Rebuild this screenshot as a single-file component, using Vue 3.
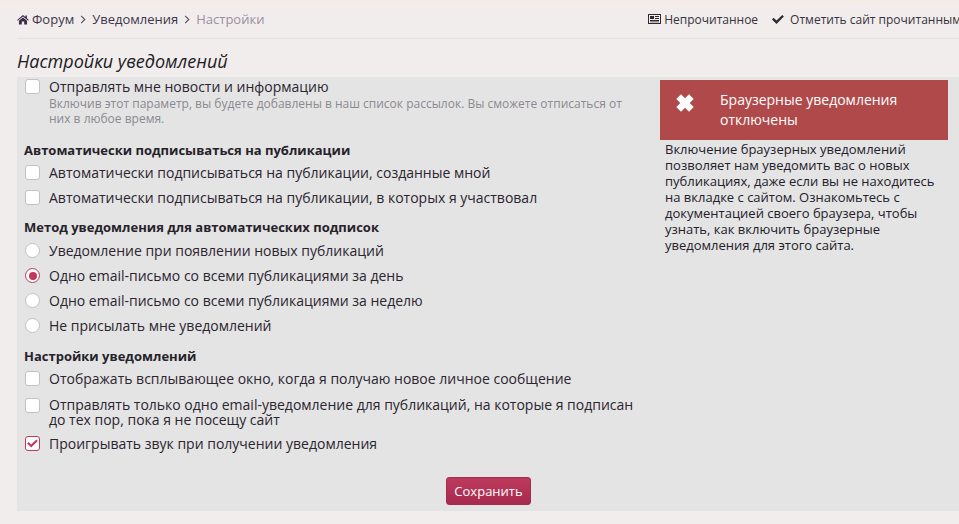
<template>
  <div class="page">
    <div class="topbar">
      <nav class="crumbs">
        <svg class="home" viewBox="0 0 16 13" width="12" height="11"><path fill="#3a2c45" d="M8 0.6 0.2 7l.8 1L8 2.4 15 8l.8-1-2.6-2.1V1h-2v2.2ZM2.6 8.2V13h3.8V9h3.2v4h3.8V8.2L8 3.8Z"/></svg>
        <a>Форум</a>
        <svg class="chev" viewBox="0 0 6 10" width="6" height="9"><path d="M1 1l4 4-4 4" fill="none" stroke="#554a5c" stroke-width="1.2"/></svg>
        <a>Уведомления</a>
        <svg class="chev" viewBox="0 0 6 10" width="6" height="9"><path d="M1 1l4 4-4 4" fill="none" stroke="#554a5c" stroke-width="1.2"/></svg>
        <span class="cur">Настройки</span>
      </nav>
      <div class="actions">
        <span class="act">
          <svg class="ic" viewBox="0 0 13 10" width="13" height="10"><path fill="#2e2a30" fill-rule="evenodd" d="M0 0h13v10H0ZM1 1v8h11V1ZM2 2h4v3H2ZM7 2h4v1H7ZM7 4h4v1H7ZM2 6h9v1H2ZM2 7.500h9v.8H2Z"/></svg>
          Непрочитанное
        </span>
        <span class="act chk">
          <svg class="ic" viewBox="0 0 12 10" width="12" height="10"><path fill="#2e2a30" d="M1.600 3.800 4.500 6.600 10.300.9 11.900 2.500 4.500 9.900 0 5.400Z"/></svg>
          Отметить сайт прочитанным
        </span>
      </div>
    </div>
    <h1 class="title">Настройки уведомлений</h1>
    <form class="panel" @submit.prevent>
      <div class="left">
        <div class="opt news">
          <span class="box"></span>
          <div>
            <div>Отправлять мне новости и информацию</div>
            <div class="hint">Включив этот параметр, вы будете добавлены в наш список рассылок. Вы сможете отписаться от них в любое время.</div>
          </div>
        </div>

        <h3 class="head h1">Автоматически подписываться на публикации</h3>
        <div class="opt"><span class="box"></span><div>Автоматически подписываться на публикации, созданные мной</div></div>
        <div class="opt"><span class="box"></span><div>Автоматически подписываться на публикации, в которых я участвовал</div></div>

        <h3 class="head h2">Метод уведомления для автоматических подписок</h3>
        <div v-for="r in radios" :key="r.t" class="opt">
          <span class="radio" :class="{ on: r.on }"></span><div>{{ r.t }}</div>
        </div>

        <h3 class="head h3">Настройки уведомлений</h3>
        <div class="opt"><span class="box"></span><div>Отображать всплывающее окно, когда я получаю новое личное сообщение</div></div>
        <div class="opt multi"><span class="box"></span><div>Отправлять только одно email-уведомление для публикаций, на которые я подписан до тех пор, пока я не посещу сайт</div></div>
        <div class="opt last">
          <span class="box checked">
            <svg viewBox="0 0 12 10" width="11" height="9"><path fill="#c0395c" d="M1.600 3.400 4.500 6.200 10.300.5 11.900 2.100 4.500 9.500 0 5Z"/></svg>
          </span>
          <div>Проигрывать звук при получении уведомления</div>
        </div>
      </div>
      <aside class="right">
        <div class="alert">
          <svg class="x" viewBox="0 0 18 18" width="18" height="18"><path fill="#fff" d="M5 .3 9 4.300 13 .3 17.700 5 13.700 9 17.700 13 13 17.700 9 13.700 5 17.700.3 13 4.300 9 .3 5Z"/></svg>
          <div class="alert-text">Браузерные уведомления отключены</div>
        </div>
        <p class="desc">Включение браузерных уведомлений позволяет нам уведомить вас о новых публикациях, даже если вы не находитесь на вкладке с сайтом. Ознакомьтесь с документацией своего браузера, чтобы узнать, как включить браузерные уведомления для этого сайта.</p>
      </aside>
      <div class="save"><button type="button">Сохранить</button></div>
    </form>
  </div>
</template>

<script setup>
const radios = [
  { t: 'Уведомление при появлении новых публикаций' },
  { t: 'Одно email-письмо со всеми публикациями за день', on: true },
  { t: 'Одно email-письмо со всеми публикациями за неделю' },
  { t: 'Не присылать мне уведомлений' }
]
</script>

<style>
html, body { margin: 0; background: #f2eded; overflow: hidden; }
</style>
<style scoped>
.page {
  width: 959px; height: 524px; overflow: hidden; box-sizing: border-box;
  padding-left: 17px;
  font-family: "Open Sans", sans-serif; font-size: 14px; color: #2b2530;
  background: linear-gradient(#f5ebe6, #f2eded 8px);
}
.topbar {
  height: 38px; display: flex; justify-content: space-between; align-items: center;
  border-bottom: 1px solid #e3dedf; font-size: 13px; white-space: nowrap;
}
.crumbs { display: flex; align-items: center; gap: 3px; color: #40354a; }
.crumbs .chev { margin: 0 3px; }
.crumbs .cur { color: #9a8fa0; }
.actions { display: flex; gap: 14px; font-size: 12px; margin-right: -2px; }
.act { display: flex; align-items: center; gap: 3px; color: #37323b; }
.act.chk { gap: 6px; }
.title {
  margin: 0; height: 38px; line-height: 44px; font-size: 18px; font-weight: 400; font-style: italic; color: #1c1c24;
}
.panel {
  background: #e4e4e4; height: 434px;
  display: grid; grid-template-columns: 616px 288px; grid-template-rows: auto 1fr; column-gap: 19px;
  padding-left: 8px; box-sizing: border-box;
}
.left { display: flex; flex-direction: column; }
.opt { display: flex; gap: 9px; line-height: 17px; min-height: 25px; align-items: flex-start; padding-top: 2px; box-sizing: border-box; }
.opt.news { padding-top: 1px; }
.box, .radio {
  flex: none; width: 15px; height: 15px; box-sizing: border-box; margin-top: 1px;
  background: #fff; border: 1px solid #c4c0c4;
}
.box { border-radius: 3px; display: flex; align-items: center; justify-content: center; }
.box.checked { border: 1.500px solid #c0395c; }
.radio { border-radius: 50%; }
.radio.on { border-color: #c0395c; position: relative; }
.radio.on::after {
  content: ""; position: absolute; left: 2.500px; top: 2.500px; width: 8px; height: 8px; border-radius: 50%; background: #c0395c;
}
.hint { font-size: 12px; line-height: 15px; color: #8c8990; margin-top: 1px; }
.head { margin: 0 0 0 -1px; font-size: 13px; font-weight: 700; line-height: 18px; color: #26222a; }
.head.h1 { margin-top: 15px; margin-bottom: 3px; }
.head.h2 { margin-top: 6px; margin-bottom: 4px; }
.head.h3 { margin-top: 7px; margin-bottom: 3px; }
.opt.multi { line-height: 15px; margin-bottom: 6px; padding-top: 4px; min-height: 0; }
.save { grid-column: 1 / -1; display: flex; justify-content: center; margin-left: 4px; padding-top: 19px; }
.save button {
  height: 28px; width: 85px; padding: 0; border: 1px solid #a82a4e; border-radius: 3px;
  background: linear-gradient(#bd3a5c, #a72a4f); color: #fff; font: 13px "Open Sans", sans-serif;
}
.right { padding-top: 3px; }
.alert {
  background: #b04a4a; color: #fff; height: 60px; display: flex; align-items: center; box-sizing: border-box; padding-left: 16px;
}
.alert .x { align-self: flex-start; margin-top: 14px; }
.alert-text { margin-left: 26px; width: 200px; line-height: 20px; font-size: 14px; }
.desc { margin: 1px 5px 0; font-size: 13px; line-height: 16px; color: #23202a; }
</style>
